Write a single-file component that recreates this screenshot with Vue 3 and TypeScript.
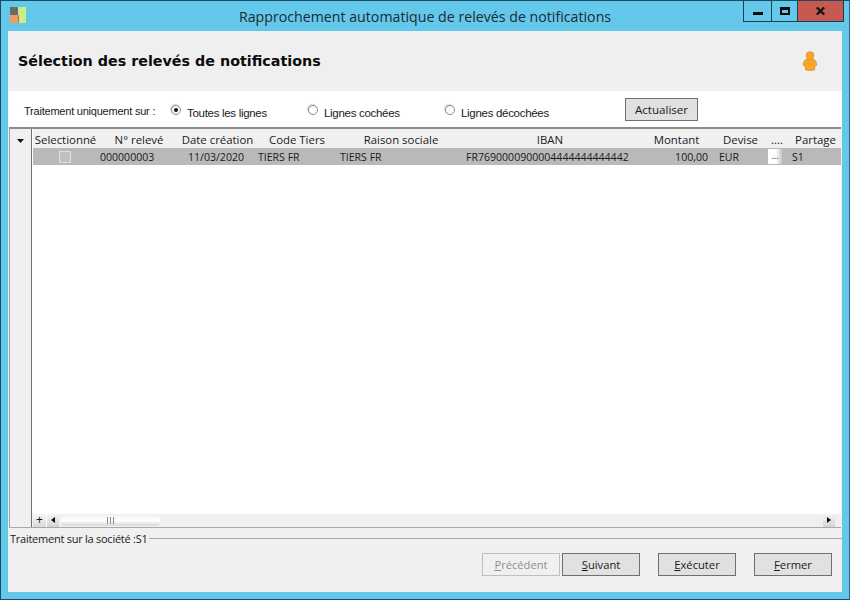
<script setup lang="ts">
interface Col { key: string; title: string; width: number; cls: string }
const columns: Col[] = [
  { key: 'sel', title: 'Selectionné', width: 65, cls: 'c-sel' },
  { key: 'num', title: 'N° relevé', width: 80, cls: 'c-num' },
  { key: 'date', title: 'Date création', width: 78, cls: 'c-date' },
  { key: 'code', title: 'Code Tiers', width: 82, cls: 'c-code' },
  { key: 'raison', title: 'Raison sociale', width: 126, cls: 'c-raison' },
  { key: 'iban', title: 'IBAN', width: 168, cls: 'c-iban' },
  { key: 'montant', title: 'Montant', width: 84, cls: 'c-montant' },
  { key: 'devise', title: 'Devise', width: 49, cls: 'c-devise' },
  { key: 'more', title: '....', width: 24, cls: 'c-more' },
  { key: 'partage', title: 'Partage', width: 49, cls: 'c-partage' },
]
const row: Record<string, string> = {
  num: '000000003',
  date: '11/03/2020',
  code: 'TIERS FR',
  raison: 'TIERS FR',
  iban: 'FR7690000900004444444444442',
  montant: '100,00',
  devise: 'EUR',
  partage: 'S1',
}
const template = columns.map((c) => `${c.width}px`).join(' ')
const filters = [
  { label: 'Toutes les lignes', checked: true, cls: 'f1' },
  { label: 'Lignes cochées', checked: false, cls: 'f2' },
  { label: 'Lignes décochées', checked: false, cls: 'f3' },
]
</script>

<template>
  <div class="window">
    <header class="titlebar">
      <svg class="app-icon" width="16" height="16" viewBox="0 0 16 16">
        <rect x="0" y="0" width="8" height="8" fill="#6b6b6b" />
        <rect x="0" y="8" width="8" height="8" fill="#f59a5e" />
        <rect x="8" y="0" width="8" height="16" fill="#c8ee8c" />
        <rect x="8" y="8" width="1" height="8" fill="#7d8a5a" />
      </svg>
      <div class="title">Rapprochement automatique de relevés de notifications</div>
      <div class="win-buttons">
        <div class="wb wb-min"><span class="i-min"></span></div>
        <div class="wb wb-max"><span class="i-max"></span></div>
        <div class="wb wb-close">
          <svg width="9" height="8" viewBox="0 0 9 8">
            <path d="M0.8 0.4 L8.2 7.6 M8.2 0.4 L0.8 7.6" stroke="#111" stroke-width="2.2" fill="none" />
          </svg>
        </div>
      </div>
    </header>

    <main class="client">
      <section class="heading">
        <h1>Sélection des relevés de notifications</h1>
        <svg class="user" width="18" height="22" viewBox="0 0 18 22">
          <path d="M5 9.5 Q9 8 13 9.5 Q15 10 15.5 13 Q16.6 15 15.5 15.6 L14 16 L13.5 20 Q9 21 4.5 20 L4 16 L2.5 15.6 Q1.4 15 2.5 13 Q3 10 5 9.5 Z" fill="#f7a428" stroke="#d08c2c" stroke-width="0.6" />
          <circle cx="9" cy="5.6" r="4" fill="#f7a428" stroke="#d08c2c" stroke-width="0.5" />
        </svg>
      </section>

      <section class="filters">
        <span class="filter-label">Traitement uniquement sur :</span>
        <div v-for="f in filters" :key="f.label" class="radio" :class="f.cls">
          <span class="dot" :class="{ on: f.checked }"></span>
          <span class="radio-text">{{ f.label }}</span>
        </div>
        <button class="btn refresh">Actualiser</button>
      </section>

      <section class="grid">
        <div class="row-headers">
          <svg class="caret" width="7" height="4" viewBox="0 0 7 4"><path d="M0 0 H7 L3.5 4 Z" fill="#111" /></svg>
        </div>
        <div class="grid-main">
          <div class="grid-body">
            <div class="grid-row head" :style="{ gridTemplateColumns: template }">
              <div v-for="c in columns" :key="c.key" class="cell" :class="c.cls">{{ c.title }}</div>
            </div>
            <div class="grid-row data" :style="{ gridTemplateColumns: template }">
              <div v-for="c in columns" :key="c.key" class="cell" :class="c.cls">
                <span v-if="c.key === 'sel'" class="check"></span>
                <span v-else-if="c.key === 'more'" class="more-btn">...</span>
                <template v-else>{{ row[c.key] }}</template>
              </div>
            </div>
          </div>
          <div class="hscroll">
            <span class="plus">+</span>
            <span class="arrow left"></span>
            <div class="track"><div class="thumb"><span class="grip"></span></div></div>
            <span class="arrow right"></span>
          </div>
        </div>
      </section>

      <footer class="footer">
        <div class="group-title">
          <span>Traitement sur la société :S1</span>
          <i class="rule"></i>
        </div>
        <div class="actions">
          <button class="btn disabled"><u>P</u>récédent</button>
          <button class="btn next"><u>S</u>uivant</button>
          <button class="btn exec"><u>E</u>xécuter</button>
          <button class="btn close"><u>F</u>ermer</button>
        </div>
      </footer>
    </main>
  </div>
</template>

<style>
html, body { margin: 0; padding: 0; background: #63c8ea; }
</style>

<style scoped>
.window {
  box-sizing: border-box;
  width: 850px;
  height: 600px;
  background: #63c8ea;
  border: 1px solid #1c4a60;
  border-right-color: #2a6a88;
  display: flex;
  flex-direction: column;
  padding: 0 7px 7px;
  font-family: "Open Sans", "Noto Sans", sans-serif;
  color: #1a1a1a;
  overflow: hidden;
}
.titlebar {
  height: 30px;
  flex: none;
  position: relative;
  display: flex;
  align-items: center;
}
.app-icon { position: absolute; left: 2px; top: 6px; }
.title {
  width: 100%;
  text-align: center;
  font-size: 14.2px;
  color: #1c2b33;
  margin-top: 1px;
}
.win-buttons {
  position: absolute;
  top: -1px;
  right: -2px;
  display: flex;
  height: 22px;
  border: 1px solid #1c3e50;
  border-top: none;
  box-sizing: border-box;
}
.wb {
  box-sizing: border-box;
  height: 21px;
  display: flex;
  align-items: center;
  justify-content: center;
  border-left: 1px solid #1c3e50;
}
.wb:first-child { border-left: none; }
.wb-min { width: 27px; }
.wb-max { width: 26px; }
.wb-close { width: 46px; background: #c75a50; }
.i-min { width: 10px; height: 3px; background: #0a0a0a; margin-top: 6px; }
.i-max { box-sizing: border-box; width: 10px; height: 8px; border: 2px solid #0a0a0a; border-top-width: 3px; margin-top: 1px; }
.client {
  flex: 1;
  min-height: 0;
  background: #f0f0f0;
  display: flex;
  flex-direction: column;
}
.heading {
  height: 60px;
  flex: none;
  background: #efefef;
  display: flex;
  align-items: center;
  justify-content: space-between;
  padding: 0 23px 0 10px;
}
.heading h1 {
  margin: 0;
  font-family: "DejaVu Sans", sans-serif;
  font-size: 14.3px;
  font-weight: 700;
  color: #0c0c0c;
}
.user { margin-top: -1px; }
.filters {
  height: 36px;
  flex: none;
  background: #fff;
  position: relative;
  display: flex;
  align-items: center;
  font-family: "Liberation Sans", Arial, sans-serif;
  font-size: 11.5px;
  letter-spacing: -0.3px;
  padding-left: 16px;
}
.filter-label { width: 147px; font-size: 11px; letter-spacing: -0.22px; margin-top: 4px; }
.radio { display: flex; align-items: center; gap: 6px; }
.f1 { width: 137px; }
.f2 { width: 137px; }
.f3 { width: 175px; }
.radio-text { margin-top: 8px; }
.dot {
  box-sizing: border-box;
  width: 10px;
  height: 10px;
  border-radius: 50%;
  border: 1px solid #8a8a8a;
  background: #fff;
  box-shadow: -1px -1px 1px #d8d8d8;
  position: relative;
  margin-top: 1px;
}
.dot.on::after {
  content: "";
  position: absolute;
  left: 2px;
  top: 2px;
  width: 4px;
  height: 4px;
  border-radius: 50%;
  background: #111;
}
.btn {
  box-sizing: border-box;
  width: 78px;
  height: 23px;
  padding: 0;
  background: #e1e1e1;
  border: 1px solid #6f6f6f;
  font-family: "Open Sans", "Noto Sans", sans-serif;
  font-size: 11.2px;
  letter-spacing: 0;
  color: #1a1a1a;
}
.refresh { width: 73px; margin-left: 5px; margin-top: 1px; font-size: 11.6px; }
.grid {
  flex: 1;
  min-height: 0;
  display: flex;
  background: #fff;
  border-top: 2px solid #8c8c8c;
  border-bottom: 1px solid #a8a8a8;
  border-left: 1px solid #a0a0a0;
  margin-left: 1px;
  margin-right: 1px;
}
.row-headers {
  width: 21px;
  flex: none;
  background: #f0f0f0;
  border-right: 1px solid #6f6f6f;
  position: relative;
}
.caret { position: absolute; left: 7px; top: 10px; }
.grid-main {
  flex: 1;
  min-width: 0;
  display: flex;
  flex-direction: column;
}
.grid-body { flex: 1; min-height: 0; padding-left: 1px; }
.grid-row { display: grid; }
.head { height: 19px; background: #f0f0f0; align-items: center; }
.head .cell { text-align: center; font-size: 11.4px; padding-top: 2px; }
.data { height: 17px; background: #b9b9b9; align-items: center; }
.data .cell { font-size: 10.55px; color: #1a1a1a; white-space: nowrap; }
.cell { white-space: nowrap; }
.data .c-sel { display: flex; justify-content: center; padding-right: 2px; }
.data .c-num { padding-left: 2px; }
.data .c-date { padding-left: 10px; }
.data .c-code { padding-left: 2px; }
.data .c-raison { padding-left: 2px; }
.data .c-iban { padding-left: 2px; }
.data .c-montant { text-align: right; padding-right: 8px; }
.data .c-devise { padding-left: 3px; }
.data .c-more { padding-left: 3px; }
.data .c-partage { padding-left: 3px; }
.head .c-num { padding-left: 2px; }
.head .c-date { padding-left: 1px; }
.head .c-iban { padding-left: 4px; }
.head .c-montant { padding-left: 5px; }
.head .c-partage { padding-left: 4px; }
.check {
  box-sizing: border-box;
  width: 12px;
  height: 12px;
  border: 1px solid #e0e0e0;
  background: #c0c0c0;
}
.more-btn {
  display: block;
  box-sizing: border-box;
  width: 14px;
  height: 15px;
  line-height: 13px;
  text-align: center;
  font-size: 9px;
  color: #222;
  background: linear-gradient(90deg, #fff 55%, #c8c8c8);
}
.hscroll {
  height: 13px;
  flex: none;
  background: #f0f0f0;
  display: flex;
  align-items: center;
  padding-left: 1px;
  padding-right: 6px;
}
.plus {
  width: 14px;
  height: 13px;
  line-height: 11px;
  text-align: center;
  font-size: 12px;
  background: linear-gradient(#f8f8f8, #d8d8d8);
  color: #111;
  border-right: 1px solid #fff;
  box-sizing: border-box;
}
.arrow {
  width: 12px;
  height: 13px;
  position: relative;
  background: linear-gradient(#f4f4f4, #d4d4d4);
  flex: none;
}
.arrow::after {
  content: "";
  position: absolute;
  top: 3px;
  border-top: 3px solid transparent;
  border-bottom: 3px solid transparent;
}
.arrow.left::after { left: 4px; border-right: 4px solid #111; }
.arrow.right::after { left: 4px; border-left: 4px solid #111; }
.track { flex: 1; padding-left: 2px; display: flex; align-items: center; }
.thumb {
  width: 99px;
  height: 11px;
  border-radius: 4px;
  background: linear-gradient(#f2f2f2, #fff 50%, #d6d6d6);
  display: flex;
  justify-content: center;
  align-items: center;
}
.grip {
  width: 7px;
  height: 7px;
  background: repeating-linear-gradient(90deg, #8a8a8a 0 1px, transparent 1px 3px);
}
.footer {
  flex: none;
  height: 64px;
  box-sizing: border-box;
  padding-top: 3px;
  display: flex;
  flex-direction: column;
}
.group-title {
  display: flex;
  align-items: center;
  font-size: 11px;
  height: 14px;
  padding-left: 2px;
  letter-spacing: -0.25px;
}
.rule { flex: 1; height: 1px; background: #a8a8a8; margin-left: 1px; }
.actions {
  display: flex;
  justify-content: flex-end;
  padding: 8px 10px 0 0;
}
.actions .btn { margin-left: 2px; }
.actions .exec { margin-left: 18px; }
.actions .close { margin-left: 18px; }
.btn.disabled {
  background: #f0f0f0;
  border-color: #bfbfbf;
  color: #8f8f8f;
}
</style>
